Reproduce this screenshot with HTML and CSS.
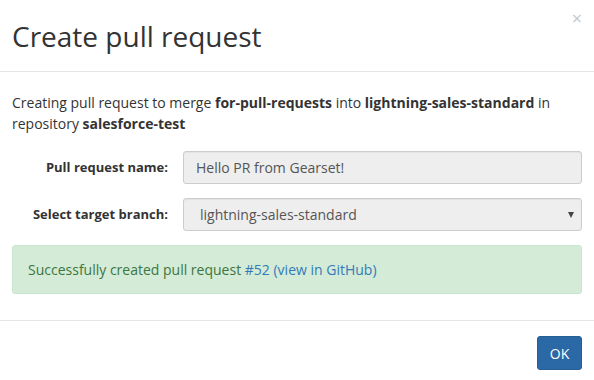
FILE: index.html
```html
<!DOCTYPE html>
<html>
<head>
<meta charset="utf-8">
<link rel="stylesheet" href="styles.css">
</head>
<body>
<div class="modal">
  <div class="modal-header">
    <h4 class="modal-title">Create pull request</h4>
    <button class="close" type="button">×</button>
  </div>
  <div class="modal-body">
    <p class="intro">Creating pull request to merge <b>for-pull-requests</b> into <b>lightning-sales-standard</b> in repository <b>salesforce-test</b></p>
    <div class="form">
      <label class="form-label">Pull request name:</label>
      <input class="form-control" type="text" value="Hello PR from Gearset!" readonly>
      <label class="form-label">Select target branch:</label>
      <div class="select-wrap">
        <select class="form-control select">
          <option>lightning-sales-standard</option>
        </select>
        <span class="caret"></span>
      </div>
    </div>
    <div class="alert">Successfully created pull request <a href="#">#52</a> <a href="#">(view in GitHub)</a></div>
  </div>
  <div class="modal-footer">
    <button class="btn" type="button">OK</button>
  </div>
</div>
</body>
</html>
```
FILE: styles.css
```css
html, body {
  margin: 0;
  padding: 0;
  background: #fff;
}
body {
  font-family: "Open Sans", "Liberation Sans", sans-serif;
  font-size: 14px;
  line-height: 21px;
  color: #333;
}
.modal {
  width: 594px;
  height: 380px;
  overflow: hidden;
}
.modal-header {
  position: relative;
  padding: 18px 12px 17px;
  border-bottom: 1px solid #e5e5e5;
}
.modal-title {
  margin: 0;
  font-size: 28px;
  line-height: 36px;
  font-weight: 400;
  color: #333;
}
.close {
  position: absolute;
  top: 6px;
  right: 12px;
  border: 0;
  background: none;
  padding: 0;
  font-family: "Open Sans", sans-serif;
  font-size: 18px;
  line-height: 24px;
  color: #c8c8c8;
  font-weight: 400;
}
.modal-body {
  padding: 20px 12px 26px;
}
.intro {
  margin: 0 0 17px;
}
.intro b {
  font-weight: 700;
}
.form {
  display: grid;
  grid-template-columns: 156px 1fr;
  column-gap: 15px;
  row-gap: 14px;
  align-items: center;
}
.form-label {
  text-align: right;
  font-weight: 700;
  font-size: 13px;
}
.form-control {
  box-sizing: border-box;
  width: 100%;
  height: 33px;
  margin: 0;
  padding: 5px 12px;
  border: 1px solid #ccc;
  border-radius: 3px;
  background: #eee;
  color: #555;
  font-family: "Open Sans", sans-serif;
  font-size: 14px;
  box-shadow: inset 0 1px 1px rgba(0,0,0,0.05);
  outline: none;
}
.select-wrap {
  position: relative;
}
.select {
  appearance: none;
  -webkit-appearance: none;
  padding-left: 16px;
}
.caret {
  position: absolute;
  right: 8px;
  top: 14px;
  width: 0;
  height: 0;
  border-left: 3px solid transparent;
  border-right: 3px solid transparent;
  border-top: 6px solid #444;
}
.alert {
  margin-top: 14px;
  padding: 13px 15px;
  border: 1px solid #c9e6cf;
  border-radius: 3px;
  background: #d4ebd8;
  color: #3c763d;
}
.alert a {
  color: #337ab7;
  text-decoration: none;
}
.modal-footer {
  border-top: 1px solid #e5e5e5;
  padding: 15px 12px;
  display: flex;
  justify-content: flex-end;
}
.btn {
  height: 34px;
  width: 45px;
  padding: 0;
  border: 1px solid #245e94;
  border-radius: 3px;
  background: #2a69a6;
  color: #fff;
  font-family: "Open Sans", sans-serif;
  font-size: 14px;
}
```
